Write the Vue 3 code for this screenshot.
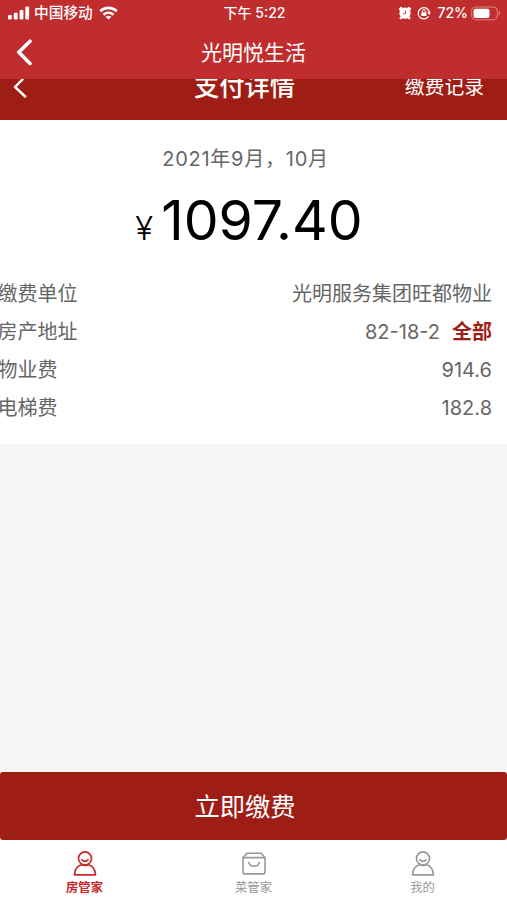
<script setup>
const rows = [
  { label: '缴费单位', value: '光明服务集团旺都物业' },
  { label: '房产地址', value: '82-18-2', link: '全部' },
  { label: '物业费', value: '914.6' },
  { label: '电梯费', value: '182.8' },
]
const tabs = [
  { label: '房管家', icon: 'person', active: true },
  { label: '菜管家', icon: 'box' },
  { label: '我的', icon: 'person' },
]
</script>

<template>
  <div class="screen">
    <header class="top">
      <div class="status">
        <div class="side">
          <svg class="signal" width="22" height="14" viewBox="0 0 22 14" fill="#fff">
            <rect x="0" y="9" width="3.8" height="4.5" rx="1" />
            <rect x="5.8" y="6.8" width="3.8" height="6.7" rx="1" />
            <rect x="11.6" y="4" width="3.8" height="9.5" rx="1" />
            <rect x="17.3" y="0.6" width="3.8" height="12.9" rx="1" />
          </svg>
          <span class="carrier">中国移动</span>
          <svg class="wifi" width="19" height="14" viewBox="0 0 19 14" fill="none" stroke="#fff" stroke-width="2.6">
            <path d="M1.2 5.2C5.8.8 13.2.8 17.8 5.2" />
            <path d="M4.5 8.7c2.9-2.6 7.1-2.6 10 0" />
            <path d="M9.5 13.6 6.7 10.9c1.6-1.4 4-1.4 5.6 0z" fill="#fff" stroke="none" />
          </svg>
        </div>
        <span class="clock">下午 5:22</span>
        <div class="side right">
          <svg width="14" height="14" viewBox="0 0 14 14">
            <circle cx="7" cy="7.2" r="5.6" fill="#fff" />
            <path d="M2 3.2 3.4 2M12 3.2 10.6 2M2.7 12.2l1.2-1.2M11.3 12.2l-1.2-1.2" stroke="#fff" stroke-width="2.4" stroke-linecap="round" />
            <path d="M7.5 4.6v3H5.2" fill="none" stroke="#c02d2e" stroke-width=".9" />
          </svg>
          <svg class="lock" width="14" height="14" viewBox="0 0 14 14" fill="none" stroke="#fff">
            <path d="M11.5 10.4A5.6 5.6 0 1 1 12.4 6.6" stroke-width="1.3" />
            <path d="M10.3 6.3h3.6l-1.8 2.6z" fill="#fff" stroke="none" />
            <rect x="4.3" y="6.3" width="5.2" height="3.7" rx=".6" fill="#fff" stroke="none" />
            <path d="M5.4 6.5V5.2a1.5 1.5 0 0 1 3 0v1.3" />
          </svg>
          <span class="percent">72%</span>
          <svg class="battery" width="30" height="15" viewBox="0 0 30 15">
            <rect x=".7" y="1" width="25.6" height="12.8" rx="3.8" fill="none" stroke="#dc8482" />
            <rect x="2.5" y="2.8" width="16" height="9.2" rx="2.2" fill="#fff" />
            <path d="M27.8 5v4.4c1.8-.6 1.8-3.8 0-4.4z" fill="#dc8482" />
          </svg>
        </div>
      </div>
      <div class="appbar">
        <svg class="back" width="17" height="27" viewBox="0 0 17 27" fill="none" stroke="#fff" stroke-width="3.5" stroke-linecap="round" stroke-linejoin="round"><path d="M14 2.2 2.8 13.2 14 24.4" /></svg>
        <h1>光明悦生活</h1>
      </div>
    </header>

    <div class="subbar">
      <svg class="subback" width="16" height="22" viewBox="0 0 16 22" fill="none" stroke="#fff" stroke-width="2.4" stroke-linecap="round" stroke-linejoin="round"><path d="M10.6.3 3 8 13.2 17.5" /></svg>
      <h2>支付详情</h2>
      <span class="history">缴费记录</span>
    </div>

    <main>
      <section class="bill">
        <p class="period">2021年9月，10月</p>
        <p class="amount"><span class="yen">¥</span><span class="sum">1097.40</span></p>
        <dl>
          <div v-for="row in rows" :key="row.label" class="row">
            <dt>{{ row.label }}</dt>
            <dd>{{ row.value }}<b v-if="row.link">{{ row.link }}</b></dd>
          </div>
        </dl>
      </section>
    </main>

    <button class="pay">立即缴费</button>

    <nav>
      <a v-for="tab in tabs" :key="tab.label" class="tab" :class="{ active: tab.active }">
        <svg v-if="tab.icon === 'person'" width="24" height="26" viewBox="0 0 24 26" fill="none" stroke="currentColor" stroke-width="1.7" stroke-linejoin="round" stroke-linecap="round">
          <circle cx="12" cy="8.4" r="6.5" />
          <path d="M9 9.8c1.4 2 4.6 2 6 0M8.3 14.7C4.2 16.1 1.8 19.3 1.5 24.8h21c-.3-5.5-2.7-8.7-6.8-10.1M8.3 14.7q3.7 1.2 7.4 0" />
        </svg>
        <svg v-else width="24" height="26" viewBox="0 0 24 26" fill="none" stroke="currentColor" stroke-width="1.6" stroke-linejoin="round" stroke-linecap="round">
          <path d="M1 7.6 4.8 3.3h14.4L23 7.6v14.3q0 2-2 2H3q-2 0-2-2zM1.2 7.6h21.6M6.8 12.6c1.3 4.8 9.1 4.8 10.4 0" />
        </svg>
        <span>{{ tab.label }}</span>
      </a>
    </nav>
  </div>
</template>

<style>
body { margin: 0; }
</style>

<style scoped>
* { box-sizing: border-box; }
h1, h2, p, dl, dt, dd { margin: 0; font-weight: 400; }
.screen {
  width: 507px;
  height: 900px;
  display: flex;
  flex-direction: column;
  overflow: hidden;
  background: #f5f5f5;
  font-family: Inter, "Noto Sans CJK SC", sans-serif;
  color: #666;
}
.top { height: 79px; flex: none; background: #c02d2e; color: #fff; }
.status {
  height: 26px;
  padding: 0 6px 0 8px;
  display: grid;
  grid-template-columns: 1fr auto 1fr;
  align-items: center;
  font-size: 14px;
  font-weight: 500;
  line-height: 26px;
}
.side { display: flex; align-items: center; }
.right { justify-content: flex-end; }
.carrier { margin-left: 4px; font-size: 14.7px; }
.wifi { margin-left: 6px; }
.clock { font-size: 14px; }
.lock { margin-left: 5px; }
.percent { margin: 0 3px 0 6px; font-size: 14px; }
.appbar {
  height: 53px;
  padding: 0 16px;
  display: grid;
  grid-template-columns: 80px 1fr 80px;
  align-items: center;
}
h1 { font-size: 21px; line-height: 53px; text-align: center; }
.subbar {
  height: 41px;
  flex: none;
  padding: 0 23px 0 12px;
  display: grid;
  grid-template-columns: 100px 1fr 110px;
  overflow: hidden;
  background: #9e1e16;
  color: #fff;
}
h2 { font-size: 25.3px; font-weight: 500; line-height: 16px; text-align: center; padding-left: 3px; }
.history { font-size: 19.8px; line-height: 17px; text-align: right; }
main { flex: 1; }
.bill { height: 324px; padding-top: 22px; background: #fff; }
.period { font-size: 20px; letter-spacing: .75px; line-height: 34px; text-align: center; padding-right: 16px; }
.amount {
  height: 74px;
  margin-top: 7px;
  display: flex;
  justify-content: center;
  align-items: baseline;
  padding-right: 9px;
  color: #000;
  line-height: 74px;
}
.yen { font-size: 33px; font-weight: 300; margin-right: 8px; }
.sum { font-size: 55.3px; }
dl { margin-top: 18px; }
.row {
  height: 38px;
  padding-right: 15px;
  display: flex;
  justify-content: space-between;
  font-size: 20px;
  line-height: 38px;
}
dt { margin-left: -2.5px; }
b { margin-left: 12px; color: #9e1e16; font-weight: 700; }
.pay {
  height: 68px;
  flex: none;
  padding: 0 17px 0 0;
  border: 0;
  border-radius: 3px;
  background: #9e1e16;
  color: #fff;
  font: 400 25.3px/70px Inter, "Noto Sans CJK SC", sans-serif;
}
nav { height: 60px; flex: none; display: grid; grid-template-columns: repeat(3, 1fr); background: #fff; }
.tab {
  display: flex;
  flex-direction: column;
  align-items: center;
  padding-top: 10px;
  color: #999;
  font-size: 12.3px;
  line-height: 24px;
}
.active { color: #c8282b; font-weight: 700; }
</style>
